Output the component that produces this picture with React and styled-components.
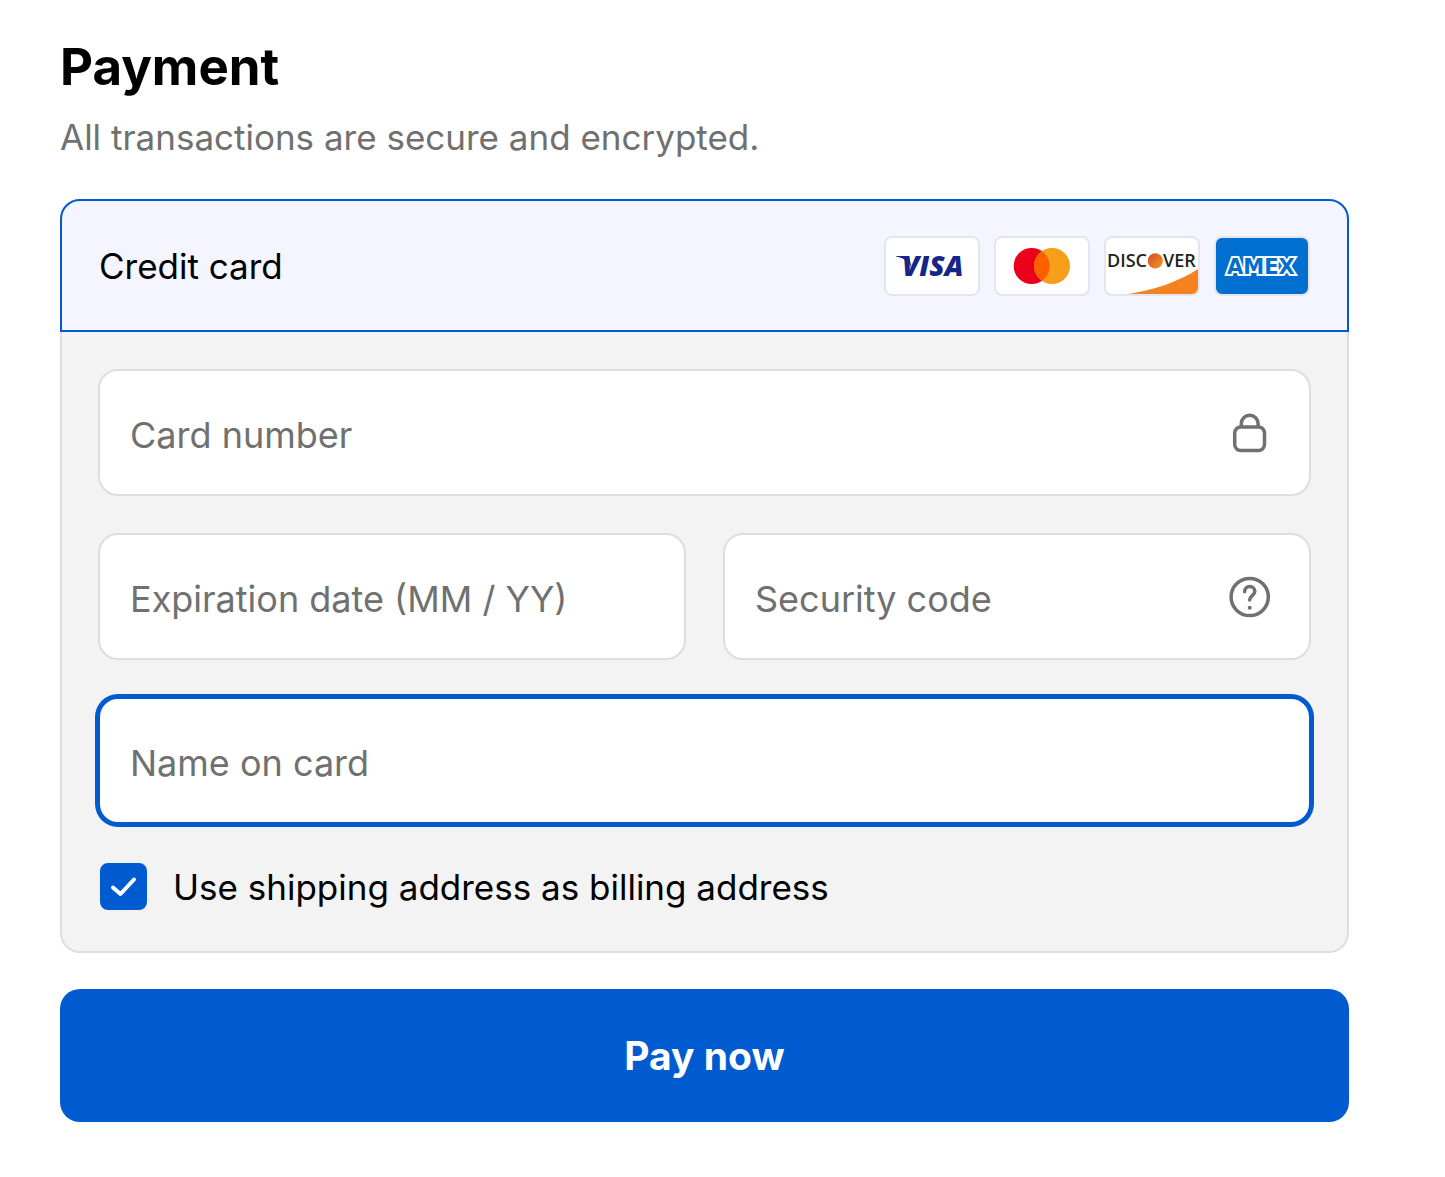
import React, { useState } from 'react'
import styled, { createGlobalStyle } from 'styled-components'


function App() {
    const [sameAddress, setSameAddress] = useState(true)

  return (
    <>
        <GlobalStyle />
        <Page>
            <Title>Payment</Title>
            <Subtitle>All transactions are secure and encrypted.</Subtitle>
            <form onSubmit={(e) => e.preventDefault()}>
                <MethodHeader>
                    <span>Credit card</span>
                    <Brands>
                        <VisaLogo />
                        <MastercardLogo />
                        <DiscoverLogo />
                        <AmexLogo />
                    </Brands>
                </MethodHeader>
                <MethodBody>
                    <Field>
                        <Input type="text" aria-label="Card number" placeholder="Card number" />
                        <LockIcon />
                    </Field>
                    <FieldRow>
                        <Field>
                            <Input type="text" aria-label="Expiration date (MM / YY)" placeholder="Expiration date (MM / YY)" />
                        </Field>
                        <Field>
                            <Input type="text" aria-label="Security code" placeholder="Security code" />
                            <HelpIcon />
                        </Field>
                    </FieldRow>
                    <Field $active>
                        <Input type="text" aria-label="Name on card" placeholder="Name on card" />
                    </Field>
                    <CheckLabel>
                        <CheckWrap>
                            <Checkbox
                                type="checkbox"
                                checked={sameAddress}
                                onChange={(e) => setSameAddress(e.target.checked)}
                            />
                            <CheckMark viewBox="0 0 47 47">
                                <path d="M13 24.5l7.500 6.500L34 16.500" />
                            </CheckMark>
                        </CheckWrap>
                        Use shipping address as billing address
                    </CheckLabel>
                </MethodBody>
                <PayButton type="submit">Pay now</PayButton>
            </form>
        </Page>
    </>
  )
}

export default App

function VisaLogo() {
  return (
    <Logo viewBox="0 0 96 60" role="img" aria-label="Visa">
        <rect x="1" y="1" width="94" height="58" rx="7" fill="#fff" stroke="#e5e5f0" strokeWidth="2" />
        <path d="M12 20h13l3 14C26 27 21 22 12 20.600z" fill="#142688" />
        <text x="18" y="40" fontFamily="Open Sans" fontSize="28" fontWeight="800" fontStyle="italic" fill="#142688">VISA</text>
    </Logo>
  )
}

function MastercardLogo() {
  return (
    <Logo viewBox="0 0 96 60" role="img" aria-label="Mastercard">
        <rect x="1" y="1" width="94" height="58" rx="7" fill="#fff" stroke="#e5e5f0" strokeWidth="2" />
        <circle cx="37.700" cy="30" r="18" fill="#eb001b" />
        <circle cx="58" cy="30" r="18" fill="#f79e1b" />
        <path d="M47.850 15.140a18 18 0 0 1 0 29.720a18 18 0 0 1 0-29.720z" fill="#ff5f00" />
    </Logo>
  )
}

function DiscoverLogo() {
  return (
    <Logo viewBox="0 0 96 60" role="img" aria-label="Discover">
        <defs>
            <linearGradient id="discover-ball" x1="0" y1="0" x2="1" y2="1">
                <stop offset="0.200" stopColor="#d9562b" />
                <stop offset="1" stopColor="#f79a20" />
            </linearGradient>
        </defs>
        <rect x="1" y="1" width="94" height="58" rx="7" fill="#fff" stroke="#e5e5f0" strokeWidth="2" />
        <path d="M24 58C50 54 74 46 94 33V52a6 6 0 0 1-6 6z" fill="#f58220" />
        <g fontFamily="Open Sans" fontSize="18" fontWeight="600" fill="#231f20">
            <text x="3" y="31">DISC</text>
            <text x="59" y="31">VER</text>
        </g>
        <circle cx="51.300" cy="24.800" r="7.600" fill="url(#discover-ball)" />
    </Logo>
  )
}

function AmexLogo() {
  return (
    <Logo viewBox="0 0 96 60" role="img" aria-label="American Express">
        <rect x="1" y="1" width="94" height="58" rx="7" fill="#006fcf" stroke="#e5e5f0" strokeWidth="2" />
        <text
            x="13"
            y="38"
            fontFamily="DejaVu Sans"
            fontSize="21"
            fontWeight="700"
            fill="#006fcf"
            stroke="#fff"
            strokeWidth="4"
            paintOrder="stroke"
        >
            AMEX
        </text>
    </Logo>
  )
}

function LockIcon() {
  return (
    <Icon viewBox="0 0 42 42" aria-hidden="true">
        <rect x="5.700" y="15" width="29.800" height="23.500" rx="6" />
        <path d="M12.300 15v-3.300a8.400 8.400 0 0 1 16.800 0V15" />
    </Icon>
  )
}

function HelpIcon() {
  return (
    <Icon viewBox="0 0 42 42" aria-hidden="true">
        <circle cx="20.700" cy="21" r="18.600" />
        <path d="M15.600 15.800c0-3.200 2.200-5.300 5.100-5.300s5.100 2.100 5.100 5c0 4-5.100 4.300-5.100 8.400" strokeLinecap="round" />
        <circle cx="20.700" cy="31.700" r="2" fill="#707070" stroke="none" />
    </Icon>
  )
}

const GlobalStyle = createGlobalStyle`
    * {
        box-sizing: border-box;
    }

    body {
        margin: 0;
        background: #fff;
        color: #000;
        font-family: Inter, "Liberation Sans", sans-serif;
        font-size: 35px;
        line-height: 44px;
    }
`

const Page = styled.main`
    padding: 35px 96px 48px 60px;
`

const Title = styled.h1`
    margin: 0;
    font-size: 51px;
    font-weight: 700;
    line-height: 64px;
`

const Subtitle = styled.p`
    margin: 16px 0 40px;
    color: #707070;
`

const MethodHeader = styled.div`
    display: flex;
    align-items: center;
    justify-content: space-between;
    min-height: 133px;
    padding: 0 37px;
    background: #f4f5ff;
    border: 2px solid #005bd1;
    border-radius: 20px 20px 0 0;
`

const Brands = styled.div`
    display: flex;
    gap: 14px;
`

const Logo = styled.svg`
    width: 96px;
    height: 60px;
`

const MethodBody = styled.div`
    display: flex;
    flex-direction: column;
    gap: 37px;
    padding: 37px 36px 39px;
    background: #f3f3f3;
    border: 2px solid #dedede;
    border-top: 0;
    border-radius: 0 0 20px 20px;
`

const FieldRow = styled.div`
    display: grid;
    grid-template-columns: repeat(2, minmax(0, 1fr));
    gap: 37px;
`

const Field = styled.div`
    display: flex;
    align-items: center;
    height: 127px;
    padding-right: 38px;
    background: #fff;
    border: 2px solid ${props => props.$active ? "#005bd1" : "#dedede"};
    border-radius: 20px;
    box-shadow: ${props => props.$active ? "0 0 0 3px #005bd1" : "none"};
`

const Input = styled.input`
    flex: 1;
    min-width: 0;
    height: 100%;
    padding: 4px 0 0 30px;
    background: transparent;
    border: 0;
    outline: 0;
    color: #000;
    font: inherit;
    font-size: 36px;

    &::placeholder {
        color: #707070;
        opacity: 1;
    }
`

const Icon = styled.svg`
    flex-shrink: 0;
    width: 42px;
    height: 42px;
    fill: none;
    stroke: #707070;
    stroke-width: 3.5;
`

const CheckLabel = styled.label`
    display: flex;
    align-items: center;
    gap: 26px;
    padding: 2px;
    cursor: pointer;
`

const CheckWrap = styled.span`
    display: grid;

    > * {
        grid-area: 1 / 1;
    }
`

const Checkbox = styled.input`
    appearance: none;
    width: 47px;
    height: 47px;
    margin: 0;
    background: #fff;
    border: 2px solid #dedede;
    border-radius: 8px;

    &:checked {
        background: #005bd1;
        border-color: #005bd1;
    }
`

const CheckMark = styled.svg`
    width: 47px;
    height: 47px;
    pointer-events: none;
    fill: none;
    stroke: #fff;
    stroke-width: 4;
    stroke-linecap: round;
    stroke-linejoin: round;
`

const PayButton = styled.button`
    width: 100%;
    height: 133px;
    margin-top: 36px;
    background: #005bd1;
    border: 0;
    border-radius: 20px;
    color: #fff;
    font: inherit;
    font-size: 39px;
    font-weight: 700;
    cursor: pointer;
`
